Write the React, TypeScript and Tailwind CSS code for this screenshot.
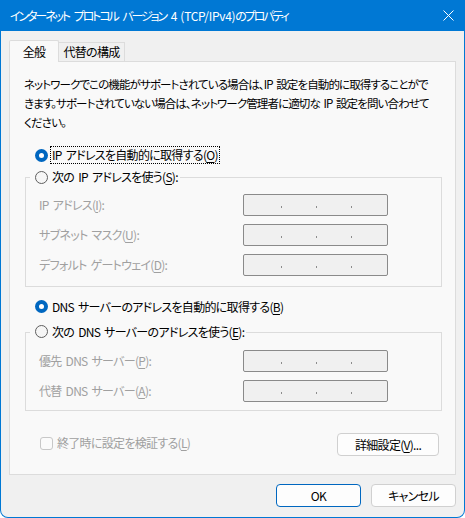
import React from 'react';

// Windows 11 style "IPv4 properties" dialog (Japanese)

const jp = "font-['Noto_Sans_CJK_JP','Noto_Sans',sans-serif] [font-feature-settings:'palt']";

function Key({ k }: { k: string }) {
  return <span className="underline underline-offset-[2px] decoration-1">{k}</span>;
}

function Radio({ checked }: { checked?: boolean }) {
  if (checked) {
    return (
      <span className="w-[13px] h-[13px] rounded-full bg-[#0067c0] flex items-center justify-center shrink-0">
        <span className="w-[5px] h-[5px] rounded-full bg-white" />
      </span>
    );
  }
  return <span className="w-[13px] h-[13px] rounded-full border border-[#5f5f5f] bg-[#f6f6f6] shrink-0" />;
}

function IpBox() {
  return (
    <div className="w-[145px] h-[22px] border border-[#8a8a8a] rounded-[2px] bg-[#f0f0f0] flex items-end pb-[7px] pl-[37px] gap-[34px]">
      <span className="w-px h-[2px] bg-[#8c8c8c]" />
      <span className="w-px h-[2px] bg-[#8c8c8c]" />
      <span className="w-px h-[2px] bg-[#8c8c8c]" />
    </div>
  );
}

function IpRow({ label }: { label: React.ReactNode }) {
  return (
    <div className="flex items-center h-[22px]">
      <span className="w-[204px] text-[#a0a0a0] whitespace-nowrap">{label}</span>
      <IpBox />
    </div>
  );
}

function Button({ children, primary, className }: { children: React.ReactNode; primary?: boolean; className?: string }) {
  return (
    <div
      className={`h-[23px] rounded-[4px] bg-[#fdfdfd] border flex items-center justify-center text-black ${
        primary ? 'border-[#0067c0]' : 'border-[#d0d0d0]'
      } ${className ?? ''}`}
    >
      <span>{children}</span>
    </div>
  );
}

export default function App() {
  return (
    <div
      className={`w-[465px] h-[518px] bg-[#0078d4] rounded-b-[8px] flex flex-col px-px pb-px text-[12px] leading-[16px] tracking-[-0.7px] [word-spacing:2px] ${jp}`}
    >
      {/* Title bar */}
      <div className="h-[31px] flex items-center justify-between pl-[9px] pr-[9px] text-white shrink-0">
        <span className="whitespace-nowrap tracking-[-2.1px] [word-spacing:4px]">
          インターネット プロトコル バージョン <span className="tracking-[-0.3px] [word-spacing:1px]">4 (TCP/IPv4)</span>のプロパティ
        </span>
        <svg width="11" height="11" viewBox="0 0 11 11" className="mr-[1px]">
          <path d="M0.5 0.5 L10.5 10.5 M10.5 0.5 L0.5 10.5" stroke="white" strokeWidth="1" />
        </svg>
      </div>

      {/* Body */}
      <div className="flex-1 bg-[#f0f0f0] rounded-b-[7px] px-[8px] flex flex-col">
        {/* Tabs */}
        <div className="flex items-end mt-[9px] h-[22px] -mb-px relative z-10">
          <div className="w-[50px] h-[22px] bg-[#f9f9f9] border border-b-0 border-[#dcdcdc] rounded-t-[2px] flex items-center justify-center">
            全般
          </div>
          <div className="w-[66px] h-[19px] bg-[#f0f0f0] border-t border-r border-[#dcdcdc] flex items-center justify-center mb-px">
            代替の構成
          </div>
        </div>

        {/* Panel */}
        <div className="h-[414px] bg-[#f9f9f9] border border-[#dcdcdc] pl-[14px] pr-[13px] pt-[13px] flex flex-col">
          <p className="leading-[19px] whitespace-nowrap text-[11.5px] tracking-[-0.9px]">
            ネットワークでこの機能がサポートされている場合は、IP 設定を自動的に取得することがで
            <br />
            きます。サポートされていない場合は、ネットワーク管理者に適切な IP 設定を問い合わせて
            <br />
            ください。
          </p>

          <div className="flex items-center gap-[3px] ml-[11px] mt-[15px] h-[16px]">
            <Radio checked />
            <span className="outline-1 outline-dotted outline-black px-[1px] whitespace-nowrap">
              IP アドレスを自動的に取得する(<Key k="O" />)
            </span>
          </div>

          <fieldset className="border border-[#dcdcdc] ml-[1px] w-[417px] mt-[6px]">
            <legend className="ml-[4px] pl-[5px] pr-[2px]">
              <span className="inline-flex items-center gap-[4px] h-[16px] whitespace-nowrap">
                <Radio />
                <span>
                  次の IP アドレスを使う(<Key k="S" />):
                </span>
              </span>
            </legend>
            <div className="pl-[13px] pt-[7px] pb-[10px] flex flex-col gap-[8px]">
              <IpRow label={<>IP アドレス(<Key k="I" />):</>} />
              <IpRow label={<>サブネット マスク(<Key k="U" />):</>} />
              <IpRow label={<>デフォルト ゲートウェイ(<Key k="D" />):</>} />
            </div>
          </fieldset>

          <div className="flex items-center gap-[4px] ml-[11px] mt-[12px] h-[16px] whitespace-nowrap">
            <Radio checked />
            <span>
              DNS サーバーのアドレスを自動的に取得する(<Key k="B" />)
            </span>
          </div>

          <fieldset className="border border-[#dcdcdc] ml-[1px] w-[417px] mt-[9px]">
            <legend className="ml-[4px] pl-[5px] pr-[2px]">
              <span className="inline-flex items-center gap-[4px] h-[16px] whitespace-nowrap">
                <Radio />
                <span>
                  次の DNS サーバーのアドレスを使う(<Key k="E" />):
                </span>
              </span>
            </legend>
            <div className="pl-[13px] pt-[9px] pb-[8px] flex flex-col gap-[8px]">
              <IpRow label={<>優先 DNS サーバー(<Key k="P" />):</>} />
              <IpRow label={<>代替 DNS サーバー(<Key k="A" />):</>} />
            </div>
          </fieldset>

          <div className="flex items-center justify-between mt-[22px] w-[415px]">
            <div className="flex items-center gap-[4px] ml-[16px] text-[#a0a0a0] whitespace-nowrap -mt-[3px]">
              <span className="w-[13px] h-[13px] rounded-[3px] border border-[#c8c8c8] bg-[#fbfbfb]" />
              <span>
                終了時に設定を検証する(<Key k="L" />)
              </span>
            </div>
            <Button className="w-[102px]">
              詳細設定(<Key k="V" />)...
            </Button>
          </div>
        </div>

        {/* Dialog buttons */}
        <div className="flex justify-end gap-[10px] mt-[9px]">
          <Button primary className="w-[85px]">OK</Button>
          <Button className="w-[85px]">キャンセル</Button>
        </div>
      </div>
    </div>
  );
}
